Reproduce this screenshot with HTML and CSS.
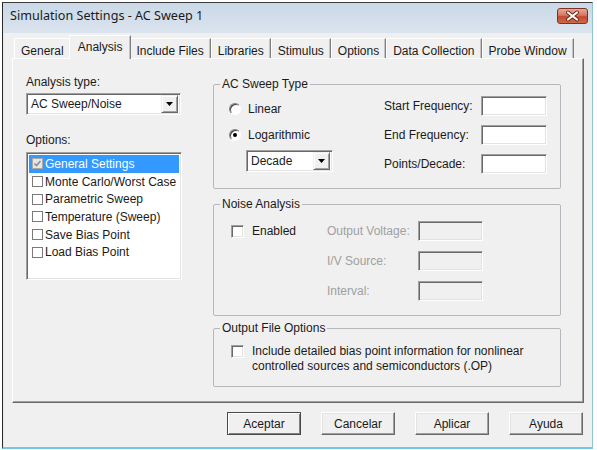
FILE: index.html
```html
<!DOCTYPE html>
<html>
<head>
<meta charset="utf-8">
<link rel="stylesheet" href="styles.css">
</head>
<body>
<div class="window">
  <div class="titlebar">
    <span class="title">Simulation Settings - AC Sweep 1</span>
    <span class="close">
      <svg width="29" height="14" viewBox="0 0 29 14">
        <path d="M10 3.5 L19 10.5 M19 3.5 L10 10.5" stroke="#6a2417" stroke-width="4" stroke-linecap="round"/>
        <path d="M10 3.5 L19 10.5 M19 3.5 L10 10.5" stroke="#ffffff" stroke-width="2.2" stroke-linecap="round"/>
      </svg>
    </span>
  </div>
  <div class="client">
    <div class="tabs">
      <div class="tab">General</div>
      <div class="tab selected">Analysis</div>
      <div class="tab">Include Files</div>
      <div class="tab">Libraries</div>
      <div class="tab">Stimulus</div>
      <div class="tab">Options</div>
      <div class="tab">Data Collection</div>
      <div class="tab">Probe Window</div>
    </div>
    <div class="panel">
      <div class="left-col">
        <div class="label">Analysis type:</div>
        <div class="combo type-combo">
          <span class="combo-text">AC Sweep/Noise</span>
          <span class="combo-btn"><svg width="7" height="4" viewBox="0 0 7 4"><polygon points="0,0 7,0 3.5,4" fill="#000"/></svg></span>
        </div>
        <div class="label options-label">Options:</div>
        <div class="listbox">
          <div class="item selected"><span class="lcb checked"><svg width="9" height="9" viewBox="0 0 9 9"><path d="M1.5 4.5 L3.5 6.5 L7.5 2" fill="none" stroke="#8c8c8c" stroke-width="1.6"/></svg></span>General Settings</div>
          <div class="item"><span class="lcb"></span>Monte Carlo/Worst Case</div>
          <div class="item"><span class="lcb"></span>Parametric Sweep</div>
          <div class="item"><span class="lcb"></span>Temperature (Sweep)</div>
          <div class="item"><span class="lcb"></span>Save Bias Point</div>
          <div class="item"><span class="lcb"></span>Load Bias Point</div>
        </div>
      </div>
      <div class="right-col">
        <fieldset class="group">
          <legend>AC Sweep Type</legend>
          <div class="ac-body">
            <div class="sweep-choices">
              <div class="radio-row"><span class="radio"></span>Linear</div>
              <div class="radio-row"><span class="radio on"></span>Logarithmic</div>
              <div class="combo decade-combo">
                <span class="combo-text">Decade</span>
                <span class="combo-btn"><svg width="7" height="4" viewBox="0 0 7 4"><polygon points="0,0 7,0 3.5,4" fill="#000"/></svg></span>
              </div>
            </div>
            <div class="fields">
              <span class="field-label">Start Frequency:</span><span class="edit"></span>
              <span class="field-label">End Frequency:</span><span class="edit"></span>
              <span class="field-label">Points/Decade:</span><span class="edit"></span>
            </div>
          </div>
        </fieldset>
        <fieldset class="group noise">
          <legend>Noise Analysis</legend>
          <div class="noise-body">
            <div class="check-row"><span class="cb"></span>Enabled</div>
            <span class="field-label disabled">Output Voltage:</span><span class="edit off"></span>
            <span class="spacer"></span>
            <span class="field-label disabled">I/V Source:</span><span class="edit off"></span>
            <span class="spacer"></span>
            <span class="field-label disabled">Interval:</span><span class="edit off"></span>
          </div>
        </fieldset>
        <fieldset class="group output">
          <legend>Output File Options</legend>
          <div class="output-body">
            <span class="cb top"></span>
            <span class="output-text">Include detailed bias point information for nonlinear<br>controlled sources and semiconductors (.OP)</span>
          </div>
        </fieldset>
      </div>
    </div>
    <div class="buttons">
      <span class="btn default">Aceptar</span>
      <span class="btn">Cancelar</span>
      <span class="btn">Aplicar</span>
      <span class="btn">Ayuda</span>
    </div>
  </div>
</div>
</body>
</html>
```
FILE: styles.css
```css
html, body {
  margin: 0;
  padding: 0;
  background: #ffffff;
}
body {
  font-family: "Liberation Sans", Arial, sans-serif;
  font-size: 12px;
  color: #1a1a1a;
}
.window {
  margin: 2px 0 0 2px;
  width: 591px;
  height: 447px;
  box-sizing: border-box;
  border-top: 1px solid #3c3c3c;
  border-left: 1px solid #2a2a2a;
  border-right: 1px solid #8cc4d8;
  border-bottom: 2px solid #72c8e2;
  background: #f0f0f0;
  display: flex;
  flex-direction: column;
  box-shadow: inset 1px 0 0 #dfe9f3;
}
.titlebar {
  height: 30px;
  flex: none;
  display: flex;
  align-items: flex-start;
  justify-content: space-between;
  background: linear-gradient(to bottom, #cad8e7, #dbe4ee);
  padding-left: 7px;
  padding-right: 4px;
}
.title {
  font-family: "Noto Sans", "Open Sans", sans-serif;
  font-size: 12.6px;
  color: #1a1a1a;
  line-height: 16px;
  margin-top: 5px;
}
.close {
  margin-top: 5px;
  width: 31px;
  height: 16px;
  box-sizing: border-box;
  border: 1px solid #7a3326;
  border-radius: 3px;
  background: linear-gradient(to bottom, #e9a898 0%, #d7765f 45%, #c24a30 55%, #cf6a4c 100%);
  display: flex;
  align-items: center;
  justify-content: center;
}
.client {
  flex: 1;
  padding: 2px 8px 0 9px;
  display: flex;
  flex-direction: column;
}
.tabs {
  height: 23px;
  display: flex;
  align-items: flex-end;
  padding-left: 2px;
}
.tab {
  height: 20px;
  box-sizing: border-box;
  padding: 5px 6px 0 6px;
  line-height: 14px;
  border-top: 1px solid #ffffff;
  border-left: 1px solid #ffffff;
  border-right: 1px solid #808080;
  box-shadow: inset -1px 0 0 #c4c4c4;
  white-space: nowrap;
}
.tab.selected {
  height: 24px;
  margin: 0 -2px -1px -2px;
  padding: 4px 8px 0 8px;
  background: #f0f0f0;
  position: relative;
  z-index: 1;
}
.panel {
  height: 345px;
  box-sizing: border-box;
  border-top: 1px solid #ffffff;
  border-left: 1px solid #ffffff;
  border-right: 1px solid #696969;
  border-bottom: 1px solid #696969;
  box-shadow: inset -1px -1px 0 #a0a0a0;
  display: flex;
  gap: 31px;
}
.left-col {
  margin-left: 13px;
  width: 156px;
  padding-top: 16px;
}
.label {
  line-height: 14px;
  height: 14px;
}
.combo {
  display: flex;
  align-items: center;
  box-sizing: border-box;
  height: 22px;
  background: #ffffff;
  border-top: 1px solid #a0a0a0;
  border-left: 1px solid #a0a0a0;
  border-right: 1px solid #ffffff;
  border-bottom: 1px solid #ffffff;
  box-shadow: inset 1px 1px 0 #696969, inset -1px -1px 0 #e3e3e3;
  padding: 2px;
}
.type-combo {
  margin-top: 4px;
  width: 155px;
}
.combo-text {
  flex: 1;
  padding-left: 2px;
  line-height: 16px;
}
.combo-btn {
  width: 17px;
  height: 18px;
  box-sizing: border-box;
  background: #f0f0f0;
  border-top: 1px solid #f0f0f0;
  border-left: 1px solid #f0f0f0;
  border-right: 1px solid #696969;
  border-bottom: 1px solid #696969;
  box-shadow: inset 1px 1px 0 #ffffff, inset -1px -1px 0 #a0a0a0;
  display: flex;
  align-items: center;
  justify-content: center;
}
.options-label {
  margin-top: 18px;
}
.listbox {
  margin-top: 5px;
  width: 156px;
  height: 128px;
  box-sizing: border-box;
  background: #ffffff;
  border-top: 1px solid #a0a0a0;
  border-left: 1px solid #a0a0a0;
  border-right: 1px solid #ffffff;
  border-bottom: 1px solid #ffffff;
  box-shadow: inset 1px 1px 0 #696969, inset -1px -1px 0 #e3e3e3;
  padding: 2px;
}
.item {
  height: 17.7px;
  display: flex;
  align-items: center;
  line-height: 14px;
  white-space: nowrap;
}
.item.selected {
  background: #3399ff;
  color: #ffffff;
}
.lcb {
  width: 11px;
  height: 11px;
  box-sizing: border-box;
  border: 1px solid #7a7a7a;
  background: #ffffff;
  margin: 0 2px 0 3px;
  flex: none;
  display: flex;
  align-items: center;
  justify-content: center;
}
.lcb.checked {
  background: #e6e6e6;
  border-color: #a8a8a8;
}
.right-col {
  width: 348px;
  padding-top: 18px;
}
.group {
  margin: 0;
  padding: 0;
  border: 1px solid #b4b8bc;
  border-radius: 2px;
  min-width: 0;
}
.group legend {
  margin-left: 6px;
  padding: 0 2px;
  line-height: 14px;
  font-size: 12px;
}
.ac-body {
  display: flex;
  padding: 5px 13px 14px 15px;
}
.sweep-choices {
  width: 155px;
  padding-top: 5px;
}
.radio-row {
  height: 16px;
  display: flex;
  align-items: center;
  line-height: 14px;
}
.radio-row + .radio-row {
  margin-top: 10px;
}
.radio {
  width: 12px;
  height: 12px;
  box-sizing: border-box;
  border-radius: 50%;
  border: 1px solid;
  border-color: #808080 #ffffff #ffffff #808080;
  background: #ffffff;
  box-shadow: inset 1px 1px 0 #404040;
  margin-right: 7px;
  display: flex;
  align-items: center;
  justify-content: center;
}
.radio.on::after {
  content: "";
  width: 4px;
  height: 4px;
  border-radius: 50%;
  background: #000;
}
.decade-combo {
  margin-top: 7px;
  margin-left: 17px;
  width: 87px;
}
.fields {
  display: grid;
  grid-template-columns: 97px 66px;
  grid-auto-rows: 20px;
  row-gap: 9px;
  align-items: center;
}
.field-label {
  line-height: 14px;
  white-space: nowrap;
}
.field-label.disabled {
  color: #a0a0a0;
}
.edit {
  height: 20px;
  box-sizing: border-box;
  background: #ffffff;
  border-top: 1px solid #a0a0a0;
  border-left: 1px solid #a0a0a0;
  border-right: 1px solid #ffffff;
  border-bottom: 1px solid #ffffff;
  box-shadow: inset 1px 1px 0 #696969, inset -1px -1px 0 #e3e3e3;
}
.edit.off {
  background: #f0f0f0;
}
.noise {
  margin-top: 8px;
}
.noise-body {
  display: grid;
  grid-template-columns: 96px 91px 65px;
  grid-auto-rows: 20px;
  row-gap: 10px;
  align-items: center;
  padding: 10px 13px 14px 17px;
}
.check-row {
  display: flex;
  align-items: center;
  line-height: 14px;
}
.cb {
  width: 13px;
  height: 13px;
  box-sizing: border-box;
  flex: none;
  background: #ffffff;
  border-top: 1px solid #a0a0a0;
  border-left: 1px solid #a0a0a0;
  border-right: 1px solid #ffffff;
  border-bottom: 1px solid #ffffff;
  box-shadow: inset 1px 1px 0 #696969, inset -1px -1px 0 #e3e3e3;
  margin-right: 8px;
}
.output {
  margin-top: 5px;
}
.output-body {
  display: flex;
  align-items: flex-start;
  padding: 9px 10px 12px 17px;
}
.cb.top {
  margin-top: 1px;
}
.output-text {
  line-height: 15px;
  white-space: nowrap;
}
.buttons {
  margin-top: 9px;
  display: flex;
  justify-content: flex-end;
  gap: 20px;
  padding-right: 1px;
}
.btn {
  width: 74px;
  height: 23px;
  box-sizing: border-box;
  display: flex;
  align-items: center;
  justify-content: center;
  border-top: 1px solid #ffffff;
  border-left: 1px solid #ffffff;
  border-right: 1px solid #696969;
  border-bottom: 1px solid #696969;
  box-shadow: inset -1px -1px 0 #a0a0a0, inset 1px 1px 0 #e3e3e3;
  background: #f0f0f0;
}
.btn.default {
  border-color: #4a4a4a;
  box-shadow: inset 1px 1px 0 #ffffff, inset -1px -1px 0 #808080;
}
```
